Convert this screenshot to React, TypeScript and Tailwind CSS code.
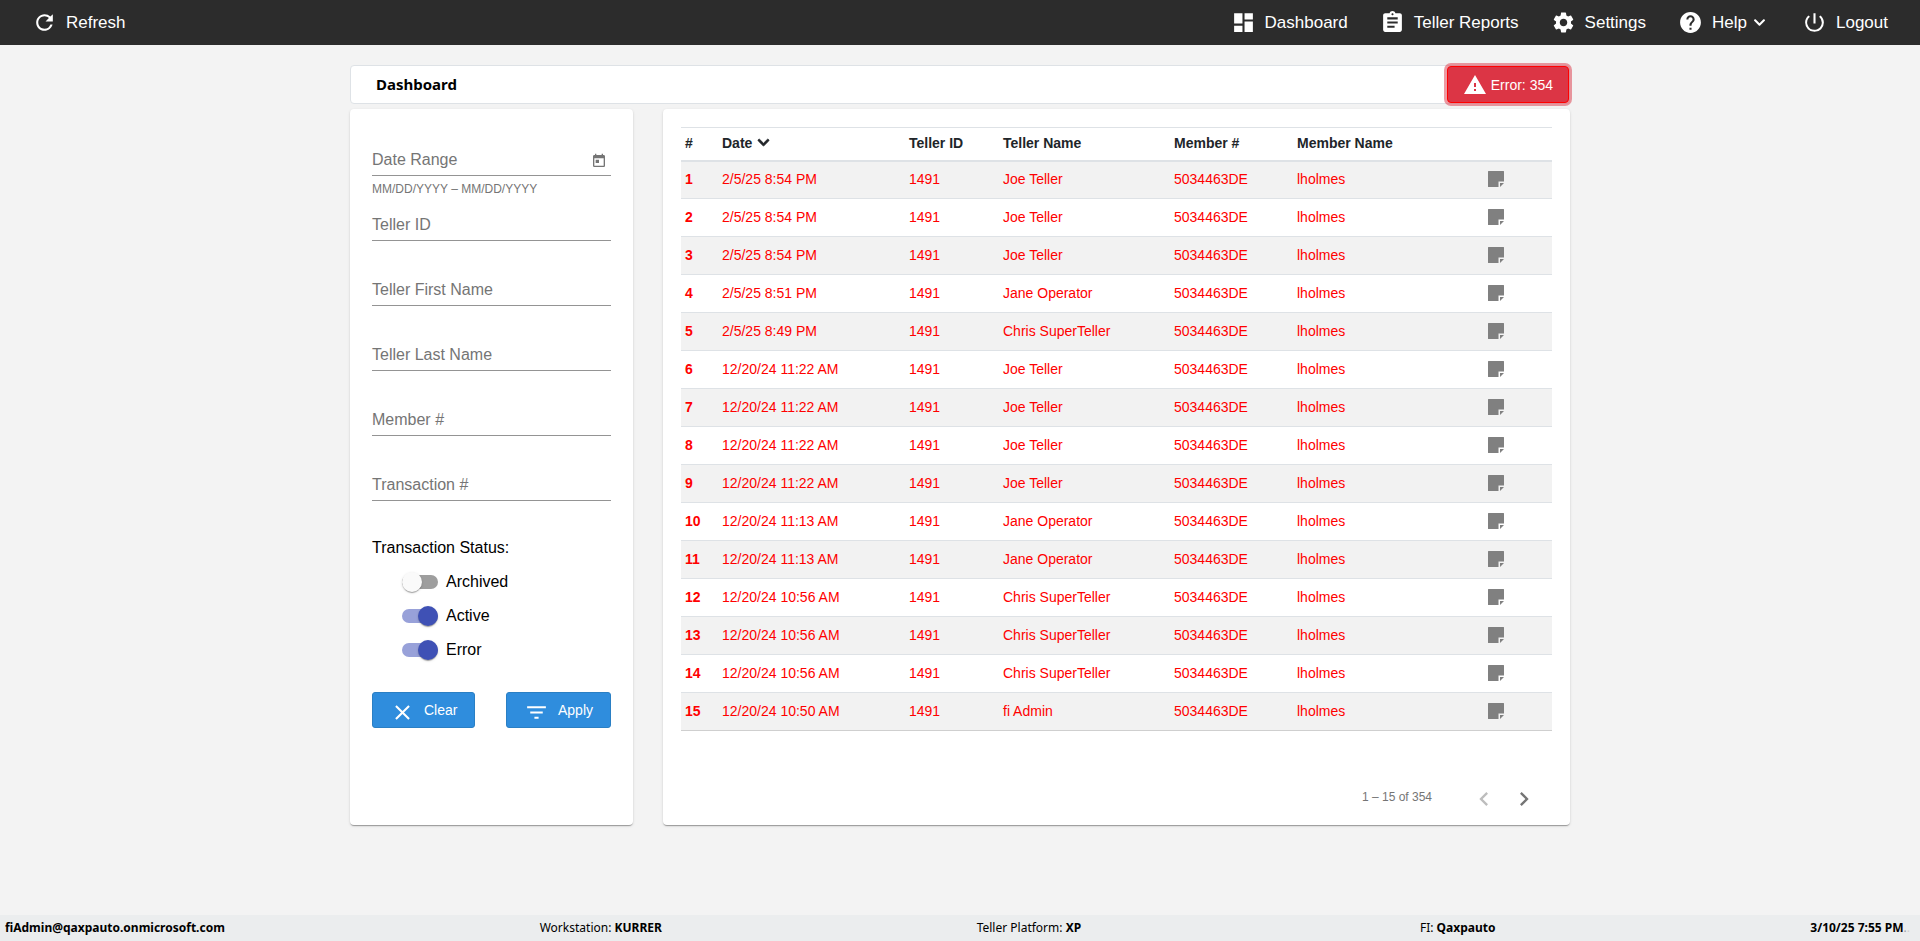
import { useState } from "react";
import type { ReactNode } from "react";
import { FaChevronDown } from "react-icons/fa";
import {
  MdAssignment,
  MdChevronLeft,
  MdChevronRight,
  MdClear,
  MdDashboard,
  MdFilterList,
  MdHelp,
  MdPowerSettingsNew,
  MdRefresh,
  MdSettings,
  MdToday,
  MdWarning,
} from "react-icons/md";

type Row = { date: string; teller: string };

const rows: Row[] = [
  { date: "2/5/25 8:54 PM", teller: "Joe Teller" },
  { date: "2/5/25 8:54 PM", teller: "Joe Teller" },
  { date: "2/5/25 8:54 PM", teller: "Joe Teller" },
  { date: "2/5/25 8:51 PM", teller: "Jane Operator" },
  { date: "2/5/25 8:49 PM", teller: "Chris SuperTeller" },
  { date: "12/20/24 11:22 AM", teller: "Joe Teller" },
  { date: "12/20/24 11:22 AM", teller: "Joe Teller" },
  { date: "12/20/24 11:22 AM", teller: "Joe Teller" },
  { date: "12/20/24 11:22 AM", teller: "Joe Teller" },
  { date: "12/20/24 11:13 AM", teller: "Jane Operator" },
  { date: "12/20/24 11:13 AM", teller: "Jane Operator" },
  { date: "12/20/24 10:56 AM", teller: "Chris SuperTeller" },
  { date: "12/20/24 10:56 AM", teller: "Chris SuperTeller" },
  { date: "12/20/24 10:56 AM", teller: "Chris SuperTeller" },
  { date: "12/20/24 10:50 AM", teller: "fi Admin" },
];

const cardShadow =
  "shadow-[0_2px_1px_-1px_rgba(0,0,0,0.2),0_1px_1px_0_rgba(0,0,0,0.14),0_1px_3px_0_rgba(0,0,0,0.12)]";

function NavLink({ icon, children }: { icon: ReactNode; children: ReactNode }) {
  return (
    <a href="#" className="flex items-center gap-[9px] text-[17px] leading-6 text-white">
      {icon}
      <span className="flex items-center gap-1.5">{children}</span>
    </a>
  );
}

function NoteIcon() {
  return (
    <svg viewBox="0 0 16 16" className="h-4 w-4" fill="#808080" aria-hidden="true">
      <path d="M.5 0h15a.5.5 0 0 1 .5.500v10h-5.500V16H.5a.5.5 0 0 1-.5-.5V.5A.5.5 0 0 1 .5 0z" />
      <path d="M12 12H16L12 16z" />
    </svg>
  );
}

// The label sits in the input until it is focused or filled, then floats above it.
function Field({ id, label, children }: { id: string; label: string; children?: ReactNode }) {
  return (
    <div className="relative flex items-end border-b border-[#949494] pt-3">
      <input
        id={id}
        type="text"
        placeholder=" "
        className="peer block h-7 min-w-0 flex-1 bg-transparent pb-1 text-black outline-none"
      />
      <label
        htmlFor={id}
        className="pointer-events-none absolute bottom-[3px] left-0 leading-6 text-[#757575] peer-focus:bottom-6 peer-focus:text-xs peer-[:not(:placeholder-shown)]:bottom-6 peer-[:not(:placeholder-shown)]:text-xs"
      >
        {label}
      </label>
      {children}
    </div>
  );
}

function Toggle({ label, initial }: { label: string; initial: boolean }) {
  const [on, setOn] = useState(initial);

  return (
    <label className="flex h-[34px] cursor-pointer items-center gap-2">
      <span className="relative flex h-5 w-9 items-center">
        <input
          type="checkbox"
          checked={on}
          onChange={(event) => setOn(event.target.checked)}
          className="peer absolute inset-0 z-10 cursor-pointer opacity-0"
        />
        <span className="h-3.5 w-9 rounded-full bg-[#9e9e9e] peer-checked:bg-[#98a1d9]" />
        <span className="absolute left-0 h-5 w-5 rounded-full bg-[#fafafa] shadow-[0_2px_1px_-1px_rgba(0,0,0,0.2),0_1px_1px_0_rgba(0,0,0,0.14),0_1px_3px_0_rgba(0,0,0,0.12)] peer-checked:left-4 peer-checked:bg-[#3f51b5]" />
      </span>
      {label}
    </label>
  );
}

function Filters() {
  return (
    <form
      className={`w-[283px] shrink-0 rounded bg-white px-[22px] pt-[26px] ${cardShadow}`}
      onSubmit={(event) => event.preventDefault()}
    >
      <Field id="date-range" label="Date Range">
        <button type="button" aria-label="Open calendar" className="mr-1 mb-1.5 text-[#757575]">
          <MdToday size={16} />
        </button>
      </Field>
      <p className="mt-[3px] mb-px text-xs leading-5 text-[#757575]">MM/DD/YYYY – MM/DD/YYYY</p>

      <div className="flex flex-col gap-6">
        <Field id="teller-id" label="Teller ID" />
        <Field id="first-name" label="Teller First Name" />
        <Field id="last-name" label="Teller Last Name" />
        <Field id="member" label="Member #" />
        <Field id="transaction" label="Transaction #" />
      </div>

      <fieldset className="mt-[35px]">
        <legend className="mb-[5px]">Transaction Status:</legend>
        <div className="ml-[30px]">
          <Toggle label="Archived" initial={false} />
          <Toggle label="Active" initial />
          <Toggle label="Error" initial />
        </div>
      </fieldset>

      <div className="mt-[25px] flex justify-between text-sm text-white">
        <button
          type="reset"
          className="flex h-9 items-center gap-[9px] rounded-[3px] border border-[#2a7fc4] bg-[#2f8ddd] px-[17px]"
        >
          <MdClear size={25} className="mt-1" />
          Clear
        </button>
        <button
          type="submit"
          className="flex h-9 items-center gap-[9px] rounded-[3px] border border-[#2a7fc4] bg-[#2f8ddd] px-[17px]"
        >
          <MdFilterList size={25} className="mt-1" />
          Apply
        </button>
      </div>
    </form>
  );
}

function Transactions() {
  return (
    <section className={`flex min-w-0 flex-1 flex-col rounded bg-white px-[18px] pt-[18px] ${cardShadow}`}>
      <table className="w-full table-fixed border-collapse text-left text-sm leading-5">
        <colgroup>
          <col className="w-[37px]" />
          <col className="w-[187px]" />
          <col className="w-[94px]" />
          <col className="w-[171px]" />
          <col className="w-[123px]" />
          <col />
          <col className="w-[68px]" />
        </colgroup>
        <thead>
          <tr className="h-[33px] border-t border-b-2 border-[#dee2e6] text-[#212529]">
            <th scope="col" className="px-1 pb-0.5">#</th>
            <th scope="col" className="px-1 pb-0.5">
              <button type="button" className="flex items-center gap-[5px] font-bold">
                Date
                <FaChevronDown size={13} stroke="currentColor" strokeWidth={32} />
              </button>
            </th>
            <th scope="col" className="px-1 pb-0.5">Teller ID</th>
            <th scope="col" className="px-1 pb-0.5">Teller Name</th>
            <th scope="col" className="px-1 pb-0.5">Member #</th>
            <th scope="col" className="px-1 pb-0.5">Member Name</th>
            <td />
          </tr>
        </thead>
        <tbody>
          {rows.map((row, index) => (
            <tr
              key={index}
              className="h-[38px] border-b border-[#dee2e6] text-[#ff0000] odd:bg-[#f2f2f2] last:border-[#cfcfcf]"
            >
              <th scope="row" className="px-1 pb-0.5">{index + 1}</th>
              <td className="px-1 pb-0.5">{row.date}</td>
              <td className="px-1 pb-0.5">1491</td>
              <td className="px-1 pb-0.5">{row.teller}</td>
              <td className="px-1 pb-0.5">5034463DE</td>
              <td className="px-1 pb-0.5">lholmes</td>
              <td className="px-1 pb-0.5">
                <button type="button" aria-label="Open note" className="block">
                  <NoteIcon />
                </button>
              </td>
            </tr>
          ))}
        </tbody>
      </table>

      <div className="mt-12 mb-1.5 flex items-center justify-end pr-2 text-xs text-[#757575]">
        <span className="mr-8 pb-1">1 – 15 of 354</span>
        <button
          type="button"
          disabled
          aria-label="Previous page"
          className="flex h-10 w-10 items-center justify-center text-[#bdbdbd]"
        >
          <MdChevronLeft size={28} />
        </button>
        <button type="button" aria-label="Next page" className="flex h-10 w-10 items-center justify-center">
          <MdChevronRight size={28} />
        </button>
      </div>
    </section>
  );
}

export default function App() {
  return (
    <div className="flex min-h-screen flex-col bg-[#f3f3f3] font-['Liberation_Sans',Arial,sans-serif] text-base text-black">
      <header className="flex h-[45px] items-center justify-between bg-[#2c2c2c] px-8">
        <NavLink icon={<MdRefresh size={25} />}>Refresh</NavLink>
        <nav className="flex items-center gap-8">
          <NavLink icon={<MdDashboard size={25} />}>Dashboard</NavLink>
          <NavLink icon={<MdAssignment size={25} />}>Teller Reports</NavLink>
          <NavLink icon={<MdSettings size={25} />}>Settings</NavLink>
          <NavLink icon={<MdHelp size={25} />}>
            Help
            <FaChevronDown size={13} className="mr-1" />
          </NavLink>
          <NavLink icon={<MdPowerSettingsNew size={25} />}>Logout</NavLink>
        </nav>
      </header>

      <main className="mx-auto w-full max-w-[1220px] flex-1 pt-5">
        <div className="mb-[5px] flex h-[39px] items-center justify-between rounded border border-[#dee2e6] bg-white pl-[25px]">
          <h1 className="font-['Noto_Sans',sans-serif] text-[15px] font-bold">Dashboard</h1>
          <button
            type="button"
            className="flex h-[37px] items-center gap-1 rounded border border-[#ff0000] bg-[#dc3545] px-[15px] text-sm text-white shadow-[0_0_0_3px_rgba(220,53,69,0.5)]"
          >
            <MdWarning size={24} />
            Error: 354
          </button>
        </div>
        <div className="flex gap-[30px]">
          <Filters />
          <Transactions />
        </div>
      </main>

      <footer className="flex h-[26px] items-center justify-between bg-[#ebedee] pr-[10px] pl-[5px] font-['Noto_Sans',sans-serif] text-xs">
        <b>fiAdmin@qaxpauto.onmicrosoft.com</b>
        <span>
          Workstation: <b>KURRER</b>
        </span>
        <span>
          Teller Platform: <b>XP</b>
        </span>
        <span className="pl-6">
          FI: <b>Qaxpauto</b>
        </span>
        <span>
          <b>3/10/25 7:55 PM</b>
          <span className="text-[#a0a0a0]">.</span>
          <span className="text-[#d0d0d0]">.</span>
        </span>
      </footer>
    </div>
  );
}
